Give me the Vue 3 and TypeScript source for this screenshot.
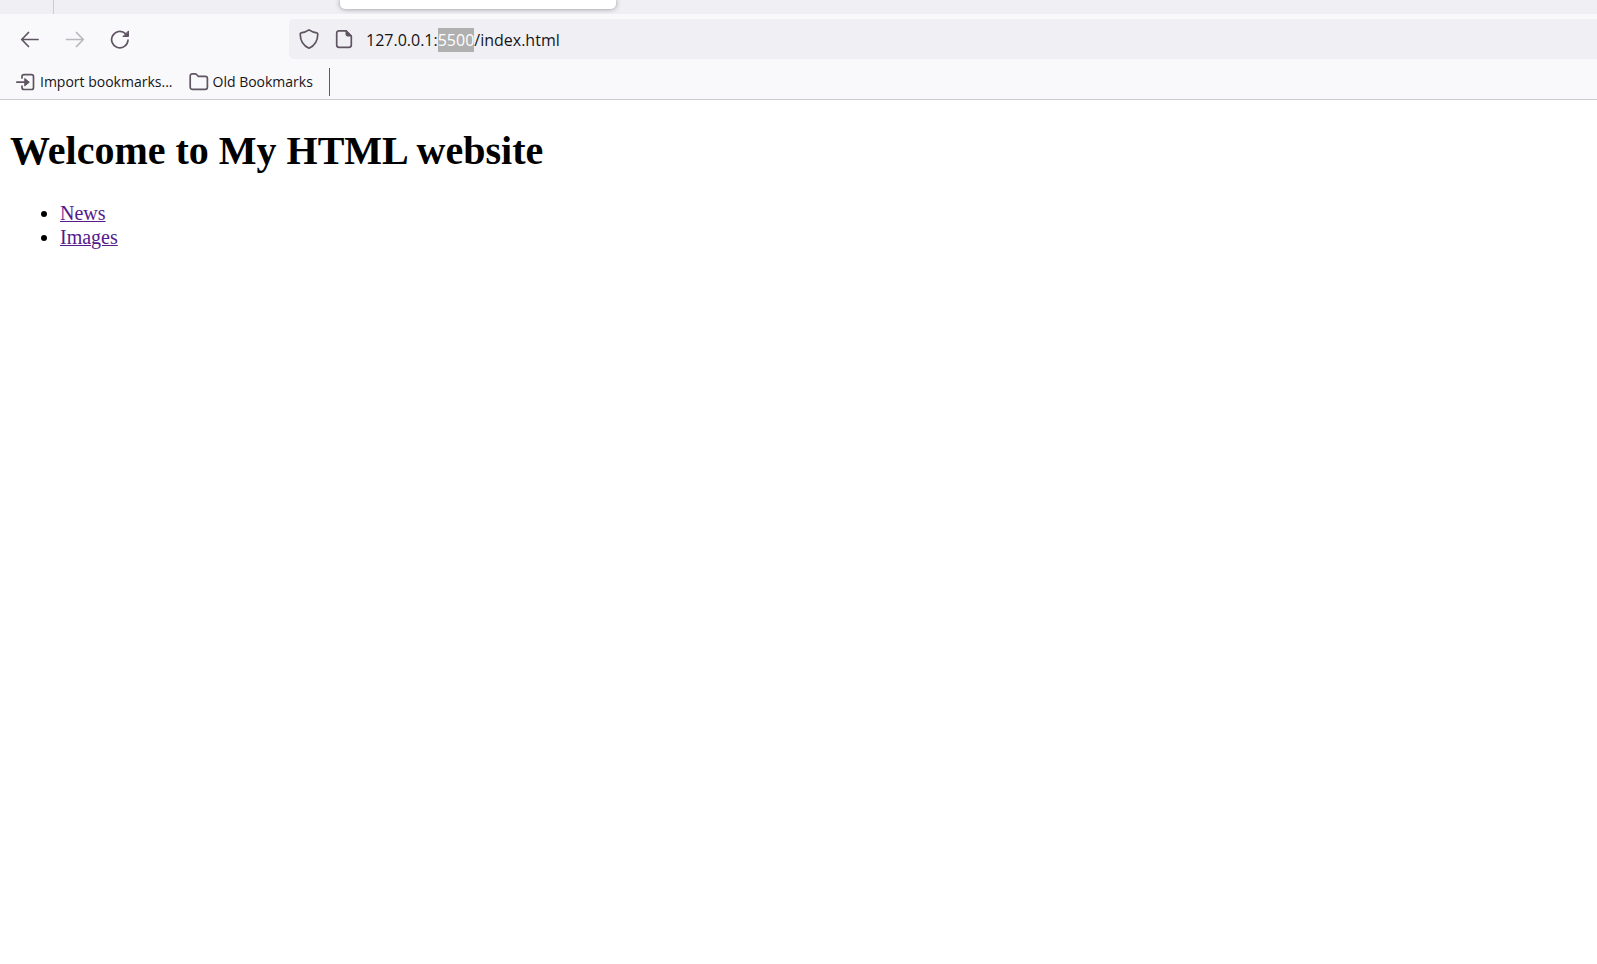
<script setup lang="ts">
import { onMounted, ref } from 'vue'

const url = ref('127.0.0.1:5500/index.html')
const address = ref<HTMLInputElement | null>(null)

const links: { label: string; href: string }[] = [
  { label: 'News', href: '#news' },
  { label: 'Images', href: '#images' },
]

// The port number starts out selected, ready to be typed over.
onMounted(() => {
  const port = '5500'
  const start = url.value.indexOf(port)
  address.value?.focus()
  address.value?.setSelectionRange(start, start + port.length)
})
</script>

<template>
  <div class="browser">
    <header class="chrome">
      <div class="tabs">
        <div class="pinned"></div>
        <div class="tab"></div>
      </div>

      <nav class="toolbar" aria-label="Navigation">
        <button class="tool" type="button" aria-label="Back">
          <svg class="icon" viewBox="0 0 20 20"><path d="M18 10.500H2M8.500 3.500 1.700 10.500 8.500 17.500" /></svg>
        </button>
        <button class="tool" type="button" aria-label="Forward" disabled>
          <svg class="icon" viewBox="0 0 20 20"><path d="M1.500 10.500h16M11.500 3.500 18.300 10.500 11.500 17.500" /></svg>
        </button>
        <button class="tool" type="button" aria-label="Reload">
          <svg class="icon" viewBox="0 0 20 20">
            <path d="M18 11.200A8.200 8.200 0 1 1 15.500 4.700" />
            <path class="solid" d="M18.500 2.300v5.200h-5.200z" />
          </svg>
        </button>

        <div class="urlbar">
          <button class="site" type="button" aria-label="Tracking protection">
            <svg class="icon" viewBox="0 0 20 20">
              <path d="M10 .9C7.800 2.500 4.500 3.600 2.200 3.900c-.7.100-1 .5-1 1.200C1.300 11.500 4 16.800 10 19.200c6-2.400 8.700-7.700 8.800-14.100 0-.7-.3-1.100-1-1.200C15.500 3.600 12.200 2.500 10 .9z" />
            </svg>
          </button>
          <button class="site" type="button" aria-label="Site information">
            <svg class="icon" viewBox="0 0 20 20">
              <path d="M12 1.800H5A2.300 2.300 0 0 0 2.700 4.100v12A2.300 2.300 0 0 0 5 18.400h10a2.300 2.300 0 0 0 2.300-2.300V7z" />
              <path class="solid" d="M12 1.800v3.700a1.500 1.500 0 0 0 1.500 1.500h3.800z" />
            </svg>
          </button>
          <input ref="address" v-model="url" class="address" type="text" aria-label="Address" spellcheck="false" />
        </div>
      </nav>

      <div class="bookmarks">
        <button class="bookmark" type="button">
          <svg class="icon" viewBox="0 0 20 20">
            <path d="M6 6V4.700a2 2 0 0 1 2-2h7.500a2 2 0 0 1 2 2v10.800a2 2 0 0 1-2 2H8a2 2 0 0 1-2-2V14M.8 10.200H9" />
            <path class="solid" d="M9 6.700l4.300 3.500L9 13.700z" />
          </svg>
          <span>Import bookmarks...</span>
        </button>
        <button class="bookmark" type="button">
          <svg class="icon" viewBox="0 0 20 20">
            <path d="M1.200 4A2.200 2.200 0 0 1 3.400 1.800h2.700c.6 0 1.100.2 1.500.7l1.600 1.800h7A2.200 2.200 0 0 1 18.400 6.500v8.700a2.200 2.200 0 0 1-2.200 2.200H3.400a2.200 2.200 0 0 1-2.200-2.200z" />
          </svg>
          <span>Old Bookmarks</span>
        </button>
        <div class="divider"></div>
      </div>
    </header>

    <main class="page">
      <h1>Welcome to My HTML website</h1>
      <ul>
        <li v-for="link in links" :key="link.label">
          <a :href="link.href">{{ link.label }}</a>
        </li>
      </ul>
    </main>
  </div>
</template>

<style>
body {
  margin: 0;
  background: #fff;
}
</style>

<style scoped>
.browser {
  min-height: 100vh;
  overflow: hidden;
}

.chrome {
  background: #f9f9fb;
  border-bottom: 1px solid #cbcbd0;
  color: #15141a;
  font-family: 'Open Sans', 'Noto Sans', sans-serif;
}

.tabs {
  display: flex;
  height: 14px;
  background: #f0f0f4;
  overflow: hidden;
}

.pinned {
  width: 53px;
  border-right: 1px solid #cbcbd0;
}

.tab {
  width: 276px;
  height: 9px;
  margin-left: 286px;
  background: #fff;
  border-radius: 0 0 5px 5px;
  box-shadow: 0 0 5px rgba(70, 70, 80, 0.6);
}

.toolbar {
  display: flex;
  align-items: center;
  gap: 5px;
  height: 50px;
  padding-left: 10px;
}

button {
  display: flex;
  align-items: center;
  justify-content: center;
  padding: 0;
  border: 0;
  background: none;
  color: inherit;
  font-family: inherit;
}

.tool {
  width: 40px;
  height: 40px;
}

.tool:disabled {
  opacity: 0.4;
}

.icon {
  flex: none;
  width: 20px;
  height: 20px;
  fill: none;
  stroke: #5f5562;
  stroke-width: 1.7;
  stroke-linecap: round;
  stroke-linejoin: round;
}

.solid {
  fill: #5f5562;
  stroke-width: 1;
}

.urlbar {
  display: flex;
  flex: 1;
  align-items: center;
  height: 40px;
  margin-left: 144px;
  padding-left: 2px;
  background: #f0f0f4;
  border-radius: 5px 0 0 5px;
}

.site {
  width: 35px;
  height: 35px;
}

.address {
  flex: 1;
  min-width: 0;
  height: 24px;
  margin-left: 5px;
  padding: 2px 0 0;
  border: 0;
  outline: 0;
  background: none;
  color: #15141a;
  font-family: inherit;
  font-size: 16px;
  line-height: 24px;
}

.address::selection {
  background: #b0b0b0;
  color: #fff;
}

.bookmarks {
  display: flex;
  align-items: center;
  gap: 16px;
  height: 35px;
  padding-left: 16px;
}

.bookmark {
  gap: 4px;
  font-size: 14px;
  line-height: 20px;
}

.divider {
  width: 1px;
  height: 28px;
  background: #5b5b66;
}

.page {
  padding: 0 10px;
  color: #000;
  font-family: 'Liberation Serif', 'Times New Roman', serif;
  font-size: 20px;
  line-height: 24px;
}

h1 {
  margin: 28px 0 27px;
  font-size: 40px;
  line-height: 46px;
}

ul {
  margin: 0;
  padding-left: 50px;
}

a {
  color: #551a8b;
  text-decoration-thickness: 1px;
}
</style>
